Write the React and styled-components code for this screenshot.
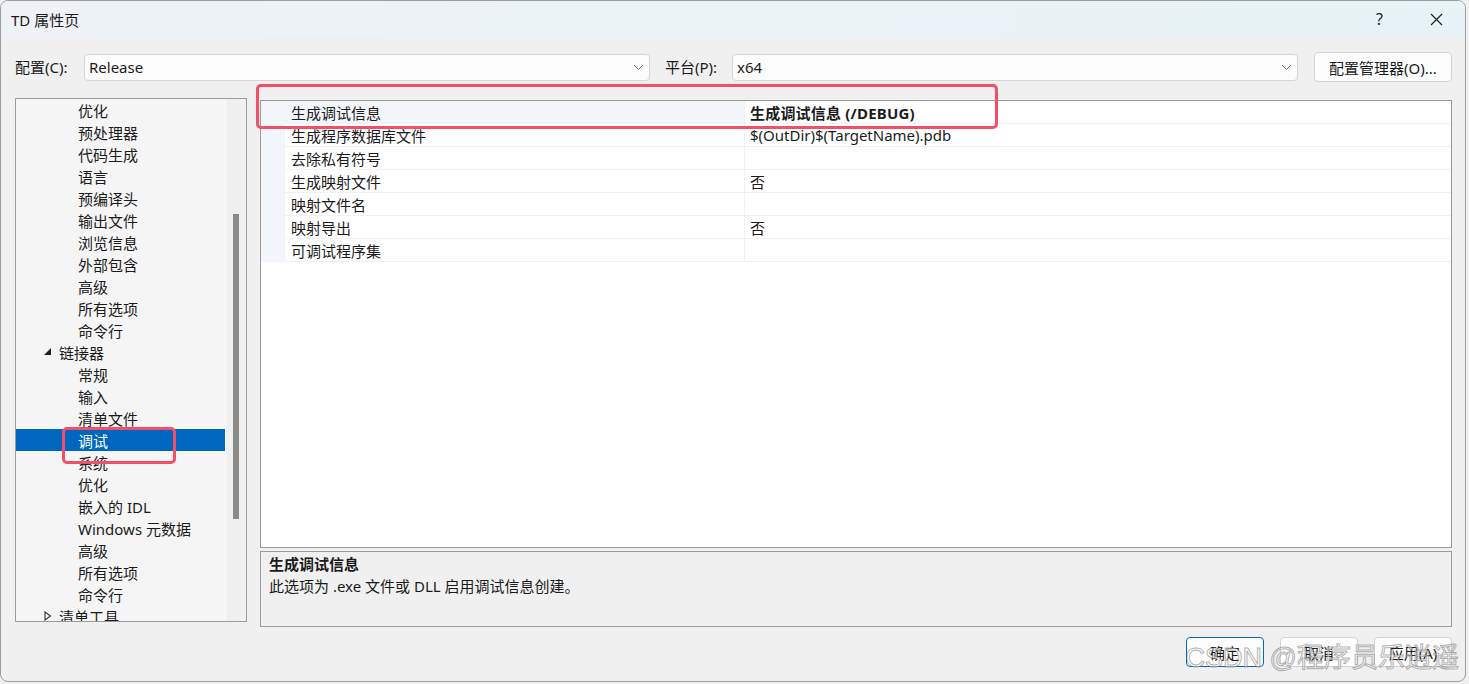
import React from 'react';
import styled, { createGlobalStyle } from 'styled-components';

const GlobalStyle = createGlobalStyle`
  html, body {
    margin: 0;
    padding: 0;
    background: #f0f0f0;
  }
  body {
    font-family: "Noto Sans", "Noto Sans CJK SC", sans-serif;
    font-size: 15px;
    color: #1b1b1b;
  }
`;

const Window = styled.div`
  position: relative;
  width: 1466px;
  height: 682px;
  box-sizing: border-box;
  border: 1px solid #9c9c9c;
  border-radius: 8px;
  overflow: hidden;
  background: #f0f0f0;
  display: flex;
  flex-direction: column;
`;

const TitleBar = styled.div`
  height: 36px;
  display: flex;
  align-items: center;
  padding-left: 10px;
  background: linear-gradient(90deg, #eef2f7, #e7f3f6);
`;

const Title = styled.div`
  flex: 1;
  font-size: 15px;
`;

const TitleButton = styled.div`
  width: 57px;
  height: 36px;
  display: flex;
  align-items: center;
  justify-content: center;
  font-size: 16px;
  color: #222;
`;

const Content = styled.div`
  padding: 15px 13px 0 14px;
  display: flex;
  flex-direction: column;
`;

const ConfigRow = styled.div`
  display: flex;
  align-items: center;
  height: 30px;
`;

const Label = styled.div`
  width: ${({ w }) => w}px;
  margin-left: ${({ ml }) => ml || 0}px;
  line-height: 27px;
`;

const Select = styled.div`
  width: 566px;
  height: 27px;
  box-sizing: border-box;
  border: 1px solid #d6d6d6;
  border-radius: 4px;
  background: #fcfcfc;
  display: flex;
  align-items: center;
  padding: 0 5px 0 4px;
`;

const SelectText = styled.div`
  flex: 1;
`;

const Button = styled.div`
  width: ${({ w }) => w}px;
  height: 30px;
  box-sizing: border-box;
  margin-left: ${({ ml }) => ml || 0}px;
  border: 1px solid ${({ primary }) => (primary ? '#0067c0' : '#d3d3d3')};
  border-radius: 4px;
  background: #fdfdfd;
  display: flex;
  align-items: center;
  justify-content: center;
  font-size: 15px;
`;

const Main = styled.div`
  display: flex;
  gap: 13px;
  margin-top: 16px;
`;

const Tree = styled.div`
  width: 232px;
  height: 524px;
  box-sizing: border-box;
  border: 1px solid #9a9a9a;
  background: #f5f5f5;
  display: flex;
  overflow: hidden;
`;

const TreeList = styled.div`
  flex: 1;
`;

const TreeRow = styled.div`
  height: 22px;
  display: flex;
  align-items: center;
  padding-left: ${({ level }) => (level === 0 ? 28 : 62)}px;
  background: ${({ selected }) => (selected ? '#0067c0' : 'transparent')};
  color: ${({ selected }) => (selected ? '#fff' : '#1b1b1b')};
  white-space: nowrap;
`;

const Expander = styled.span`
  width: 15px;
  display: inline-flex;
  align-items: center;
`;

const ScrollTrack = styled.div`
  width: 21px;
  background: #f0f0f0;
  border-left: 1px solid #fafafa;
  padding-top: 115px;
  box-sizing: border-box;
`;

const ScrollThumb = styled.div`
  width: 6px;
  height: 305px;
  margin-left: 7px;
  background: #8a8a8a;
`;

const RightCol = styled.div`
  flex: 1;
  display: flex;
  flex-direction: column;
  gap: 3px;
  padding-top: 2px;
`;

const Grid = styled.div`
  height: 448px;
  box-sizing: border-box;
  border: 1px solid #9a9a9a;
  background: #fff;
`;

const GridRow = styled.div`
  display: grid;
  grid-template-columns: 24px 460px 1fr;
  height: 23px;
`;

const Gutter = styled.div`
  background: #f2f5fa;
`;

const Cell = styled.div`
  display: flex;
  align-items: center;
  padding-left: ${({ value }) => (value ? 5 : 6)}px;
  border-bottom: 1px solid #eef0f3;
  border-right: ${({ value }) => (value ? 'none' : '1px solid #eef0f3')};
  background: ${({ active }) => (active ? '#f2f5fa' : '#fff')};
  font-weight: ${({ bold }) => (bold ? 700 : 400)};
  letter-spacing: ${({ bold }) => (bold ? '0.2px' : '0')};
  white-space: nowrap;
`;

const Desc = styled.div`
  height: 76px;
  box-sizing: border-box;
  border: 1px solid #9a9a9a;
  background: #f0f0f0;
  padding: 1px 8px;
  line-height: 22px;
`;

const DescTitle = styled.div`
  font-weight: 700;
`;

const Footer = styled.div`
  display: flex;
  justify-content: flex-end;
  margin-top: 10px;
`;

const Annotation = styled.div`
  position: absolute;
  left: ${({ x }) => x}px;
  top: ${({ y }) => y}px;
  width: ${({ w }) => w}px;
  height: ${({ h }) => h}px;
  box-sizing: border-box;
  border: 3px solid #f24f68;
  border-radius: 5px;
  pointer-events: none;
`;

const Watermark = styled.div`
  position: absolute;
  right: 6px;
  bottom: 6px;
  font-size: 27px;
  font-family: "Liberation Sans", "Noto Sans CJK SC", sans-serif;
  color: rgba(255, 255, 255, 0.55);
  -webkit-text-stroke: 1px rgba(110, 110, 110, 0.55);
  pointer-events: none;
  white-space: nowrap;
`;

const Chevron = () => (
  <svg width="11" height="7" viewBox="0 0 11 7">
    <path d="M1 1 L5.5 5.5 L10 1" fill="none" stroke="#707070" strokeWidth="1" />
  </svg>
);

const CloseIcon = () => (
  <svg width="13" height="13" viewBox="0 0 13 13">
    <path d="M1 1 L12 12 M12 1 L1 12" stroke="#222" strokeWidth="1.2" />
  </svg>
);

const Expanded = () => (
  <svg width="8" height="8" viewBox="0 0 8 8">
    <path d="M7 0 L7 7 L0 7 Z" fill="#222" />
  </svg>
);

const Collapsed = () => (
  <svg width="8" height="10" viewBox="0 0 8 10">
    <path d="M1 1 L6.5 5 L1 9 Z" fill="none" stroke="#333" strokeWidth="1.1" />
  </svg>
);

const treeItems = [
  { label: '优化' },
  { label: '预处理器' },
  { label: '代码生成' },
  { label: '语言' },
  { label: '预编译头' },
  { label: '输出文件' },
  { label: '浏览信息' },
  { label: '外部包含' },
  { label: '高级' },
  { label: '所有选项' },
  { label: '命令行' },
  { label: '链接器', level: 0, open: true },
  { label: '常规' },
  { label: '输入' },
  { label: '清单文件' },
  { label: '调试', selected: true },
  { label: '系统' },
  { label: '优化' },
  { label: '嵌入的 IDL' },
  { label: 'Windows 元数据' },
  { label: '高级' },
  { label: '所有选项' },
  { label: '命令行' },
  { label: '清单工具', level: 0, open: false },
];

const props = [
  { name: '生成调试信息', value: '生成调试信息 (/DEBUG)', active: true },
  { name: '生成程序数据库文件', value: '$(OutDir)$(TargetName).pdb' },
  { name: '去除私有符号', value: '' },
  { name: '生成映射文件', value: '否' },
  { name: '映射文件名', value: '' },
  { name: '映射导出', value: '否' },
  { name: '可调试程序集', value: '' },
];

const App = () => {
  return (
    <>
      <GlobalStyle />
      <Window>
        <TitleBar>
          <Title>TD 属性页</Title>
          <TitleButton>?</TitleButton>
          <TitleButton>
            <CloseIcon />
          </TitleButton>
        </TitleBar>
        <Content>
          <ConfigRow>
            <Label w={69}>配置(C):</Label>
            <Select>
              <SelectText>Release</SelectText>
              <Chevron />
            </Select>
            <Label w={67} ml={15}>平台(P):</Label>
            <Select>
              <SelectText>x64</SelectText>
              <Chevron />
            </Select>
            <Button w={138} ml={16}>配置管理器(O)...</Button>
          </ConfigRow>
          <Main>
            <Tree>
              <TreeList>
                {treeItems.map((item, i) => (
                  <TreeRow key={i} level={item.level} selected={item.selected}>
                    {item.level === 0 && (
                      <Expander>{item.open ? <Expanded /> : <Collapsed />}</Expander>
                    )}
                    {item.label}
                  </TreeRow>
                ))}
              </TreeList>
              <ScrollTrack>
                <ScrollThumb />
              </ScrollTrack>
            </Tree>
            <RightCol>
              <Grid>
                {props.map((p, i) => (
                  <GridRow key={i}>
                    <Gutter />
                    <Cell active={p.active}>{p.name}</Cell>
                    <Cell value bold={p.active}>{p.value}</Cell>
                  </GridRow>
                ))}
              </Grid>
              <Desc>
                <DescTitle>生成调试信息</DescTitle>
                <div>此选项为 .exe 文件或 DLL 启用调试信息创建。</div>
              </Desc>
            </RightCol>
          </Main>
          <Footer>
            <Button w={78} primary>确定</Button>
            <Button w={78} ml={16}>取消</Button>
            <Button w={78} ml={16}>应用(A)</Button>
          </Footer>
        </Content>
        <Annotation x={255} y={83} w={742} h={45} />
        <Annotation x={61} y={426} w={114} h={37} />
        <Watermark>CSDN @程序员乐逍遥</Watermark>
      </Window>
    </>
  );
};

export default App;
